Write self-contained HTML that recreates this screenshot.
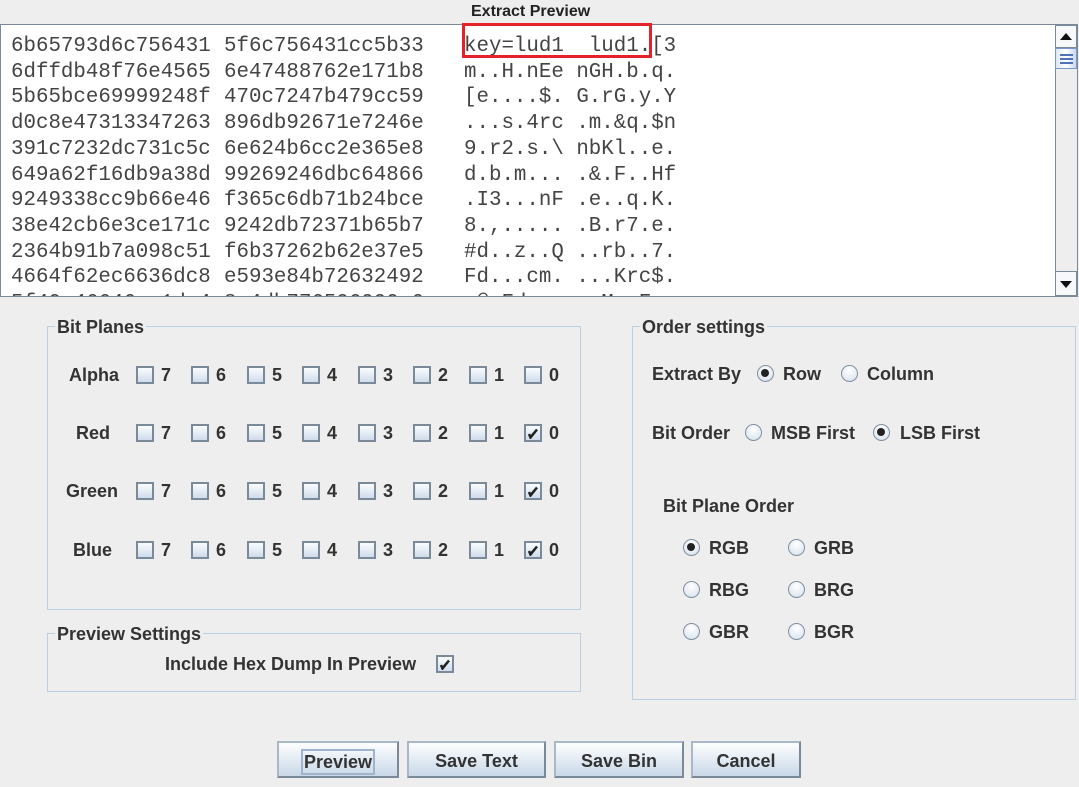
<!DOCTYPE html>
<html><head><meta charset="utf-8"><style>
*{margin:0;padding:0;box-sizing:border-box}
body{width:1079px;height:787px;background:#eeeeee;position:relative;overflow:hidden;font-family:"Liberation Sans",Arial,sans-serif;font-weight:bold;color:#333;font-size:18px}
.a{position:absolute;white-space:pre}
.ta{position:absolute;left:0;top:24px;width:1078px;height:273px;background:#fff;border:1px solid #7a8a99;overflow:hidden}
.m{position:absolute;font-family:"Liberation Mono","Courier New",monospace;font-weight:normal;font-size:20.8px;color:#444;white-space:pre;line-height:25.7px}
.grp{position:absolute;border:1px solid #b8cfe5}
.gt{position:absolute;background:#eeeeee;padding:0 2px;line-height:20px}
.cb{position:absolute;width:18px;height:18px;border:2px solid #7a8a99;background:linear-gradient(#fafcfe,#cfdceb)}
.cb svg{position:absolute;left:1px;top:1px}
.rd{position:absolute;width:17px;height:17px;border-radius:50%;border:1.5px solid #8090a0;background:radial-gradient(circle at 50% 30%,#fff,#d4e0ec)}
.rd.s::after{content:"";position:absolute;left:3px;top:3px;width:8px;height:8px;border-radius:50%;background:#222}
.btn{position:absolute;height:37px;border:2px solid #7a8a99;border-top-color:#a8b8c8;border-left-color:#a8b8c8;background:linear-gradient(#fdfeff,#c9d8e8);text-align:center;line-height:37px;font-size:18px}
</style></head><body>
<div class="a" style="left:471px;top:3px;font-size:16px;color:#222">Extract Preview</div>
<div class="ta">
<div class="m" style="left:10px;top:9px">6b65793d6c756431
6dffdb48f76e4565
5b65bce69999248f
d0c8e47313347263
391c7232dc731c5c
649a62f16db9a38d
9249338cc9b66e46
38e42cb6e3ce171c
2364b91b7a098c51
4664f62ec6636dc8
5f40a46646ce1de4</div>
<div class="m" style="left:223px;top:9px">5f6c756431cc5b33
6e47488762e171b8
470c7247b479cc59
896db92671e7246e
6e624b6cc2e365e8
99269246dbc64866
f365c6db71b24bce
9242db72371b65b7
f6b37262b62e37e5
e593e84b72632492
8e4db776596990c6</div>
<div class="m" style="left:463px;top:9px">key=lud1  lud1.[3
m..H.nEe nGH.b.q.
[e....$. G.rG.y.Y
...s.4rc .m.&amp;q.$n
9.r2.s.\ nbKl..e.
d.b.m... .&amp;.F..Hf
.I3...nF .e..q.K.
8.,..... .B.r7.e.
#d..z..Q ..rb..7.
Fd...cm. ...Krc$.
_@.Fd... ..Mn.F..</div>
<div style="position:absolute;left:1054px;top:0;width:22px;height:271px;background:#eeeeee;border-left:1px solid #7a8a99"></div>
<div style="position:absolute;left:1054px;top:0;width:22px;height:23px;border:1px solid #7a8a99;background:#f6f8fa"><div style="position:absolute;left:4px;top:7px;border-left:6px solid transparent;border-right:6px solid transparent;border-bottom:7px solid #111"></div></div>
<div style="position:absolute;left:1054px;top:23px;width:22px;height:21px;border:1px solid #7a9ac8;background:linear-gradient(90deg,#dde8f6,#fff,#c8d8ee)"><div style="position:absolute;left:4px;top:5px;width:13px;height:2px;background:#5070b8;box-shadow:0 4px 0 #5070b8,0 8px 0 #5070b8"></div></div>
<div style="position:absolute;left:1054px;top:246px;width:22px;height:25px;border:1px solid #7a8a99;background:#f6f8fa"><div style="position:absolute;left:4px;top:9px;border-left:6px solid transparent;border-right:6px solid transparent;border-top:7px solid #111"></div></div>
</div>
<div style="position:absolute;left:462px;top:23px;width:190px;height:35px;border:3px solid #e5212a"></div>

<div class="grp" style="left:47px;top:326px;width:534px;height:284px"></div>
<div class="gt" style="left:55px;top:317px">Bit Planes</div>
<div class="a" style="left:69px;top:365px">Alpha</div>
<div class="a" style="left:76px;top:423px">Red</div>
<div class="a" style="left:66px;top:481px">Green</div>
<div class="a" style="left:73px;top:540px">Blue</div>

<div class="grp" style="left:47px;top:633px;width:534px;height:59px"></div>
<div class="gt" style="left:55px;top:624px">Preview Settings</div>
<div class="a" style="left:165px;top:654px">Include Hex Dump In Preview</div>
<div class="cb" style="left:436px;top:655px"><svg width="12" height="12" viewBox="0 0 12 12"><path d="M2 7 L3.5 10.5 L10 2.5 L4.5 9" fill="none" stroke="#222" stroke-width="2.5" stroke-linejoin="miter"/></svg></div>

<div class="grp" style="left:632px;top:326px;width:444px;height:374px"></div>
<div class="gt" style="left:640px;top:317px">Order settings</div>
<div class="a" style="left:652px;top:364px">Extract By</div>
<div class="rd s" style="left:757px;top:365px"></div><div class="a" style="left:783px;top:364px">Row</div>
<div class="rd" style="left:841px;top:365px"></div><div class="a" style="left:867px;top:364px">Column</div>
<div class="a" style="left:652px;top:423px">Bit Order</div>
<div class="rd" style="left:745px;top:424px"></div><div class="a" style="left:771px;top:423px">MSB First</div>
<div class="rd s" style="left:873px;top:424px"></div><div class="a" style="left:900px;top:423px">LSB First</div>
<div class="a" style="left:663px;top:496px">Bit Plane Order</div>
<div class="rd s" style="left:683px;top:539px"></div><div class="a" style="left:709px;top:538px">RGB</div>
<div class="rd" style="left:788px;top:539px"></div><div class="a" style="left:814px;top:538px">GRB</div>
<div class="rd" style="left:683px;top:581px"></div><div class="a" style="left:709px;top:580px">RBG</div>
<div class="rd" style="left:788px;top:581px"></div><div class="a" style="left:814px;top:580px">BRG</div>
<div class="rd" style="left:683px;top:623px"></div><div class="a" style="left:709px;top:622px">GBR</div>
<div class="rd" style="left:788px;top:623px"></div><div class="a" style="left:814px;top:622px">BGR</div>

<div class="btn" style="left:277px;top:741px;width:122px"><span style="border:2px solid #a0b4cc;padding:0 1px;line-height:22px;display:inline-block;vertical-align:middle">Preview</span></div>
<div class="btn" style="left:407px;top:741px;width:139px">Save Text</div>
<div class="btn" style="left:554px;top:741px;width:130px">Save Bin</div>
<div class="btn" style="left:691px;top:741px;width:110px">Cancel</div>

<script>
var xs=[136,191,247,302,358,413,469,524],ys=[366,424,482,541],lb=[7,6,5,4,3,2,1,0];
var ck='<svg width="12" height="12" viewBox="0 0 12 12"><path d="M2 7 L3.5 10.5 L10 2.5 L4.5 9" fill="none" stroke="#222" stroke-width="2.5"/></svg>';
var h='';
for(var r=0;r<4;r++)for(var i=0;i<8;i++){
var c=(r>0&&i==7)?ck:'';
h+='<div class="cb" style="left:'+xs[i]+'px;top:'+ys[r]+'px">'+c+'</div><div class="a" style="left:'+(xs[i]+25)+'px;top:'+(ys[r]-1)+'px">'+lb[i]+'</div>';}
document.body.insertAdjacentHTML('beforeend',h);
</script>
</body></html>
